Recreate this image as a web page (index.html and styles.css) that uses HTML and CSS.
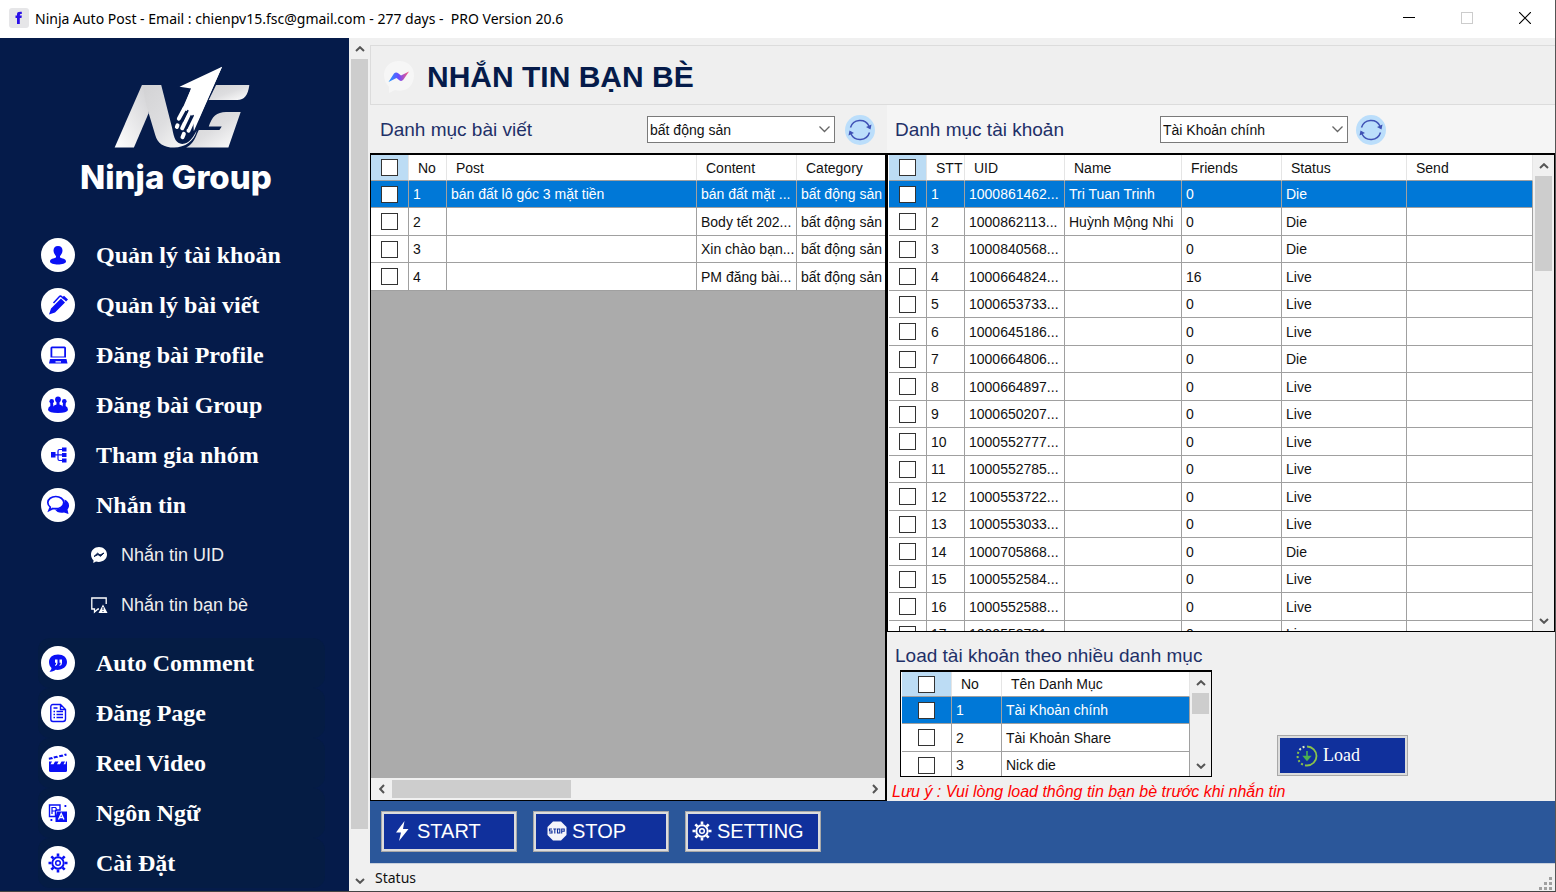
FILE: index.html
```
<!DOCTYPE html>
<html lang="vi">
<head>
<meta charset="utf-8">
<meta name="viewport" content="width=device-width, initial-scale=1">
<title>Ninja Auto Post</title>
<link rel="stylesheet" href="styles.css">
</head>
<body>
<svg class="symbols" aria-hidden="true">
  <symbol id="chev-up" viewBox="0 0 10 6"><path d="M1 5 5 1.200l4 3.800" fill="none" stroke="#555" stroke-width="2"/></symbol>
  <symbol id="chev-down" viewBox="0 0 10 6"><path d="M1 1 5 4.800l4-3.800" fill="none" stroke="#555" stroke-width="2"/></symbol>
  <symbol id="refresh" viewBox="0 0 30 30">
    <circle cx="15" cy="15" r="15" fill="#bbdefb"/>
    <g fill="none" stroke="#3f51b5" stroke-width="1.500">
      <path d="M5.500 12.500a10 10 0 0 1 18.500-1.500"/><path d="M24.500 17.500a10 10 0 0 1-18.500 1.500"/>
    </g>
    <path d="M26.500 9.500 25.500 14.500 21 12zM3.500 20.500 4.500 15.500 9 18z" fill="#3f51b5"/>
  </symbol>
  <symbol id="gear" viewBox="0 0 20 20">
    <g fill="none" stroke="currentColor">
      <circle cx="10" cy="10" r="5.700" stroke-width="1.900"/>
      <circle cx="10" cy="10" r="2.300" stroke-width="1.500"/>
      <path stroke-width="2.600" d="M10 .5v3M10 16.500v3M.5 10h3M16.500 10h3M3.300 3.300l2.100 2.100M14.600 14.600l2.100 2.100M3.300 16.700l2.100-2.100M14.600 5.400l2.100-2.100"/>
    </g>
  </symbol>
</svg>

<div class="window">
  <header class="titlebar">
    <svg class="app-icon" viewBox="0 0 20 20"><rect width="20" height="20" rx="3" fill="#e6e6e8"/><path d="M8 16V10H6.500V7.600H8V6.300C8 4.200 9.200 3.500 12.800 3.800V6C11.300 5.900 10.800 6.100 10.800 7.600H12.800L12.500 10H10.800V16z" fill="#2a10e8"/></svg>
    <span class="app-title">Ninja Auto Post - Email : chienpv15.fsc@gmail.com - 277 days -&nbsp; PRO Version 20.6</span>
    <div class="win-controls">
      <button aria-label="Minimize"><svg viewBox="0 0 12 12"><path d="M0 5.500h12" stroke="#000"/></svg></button>
      <button aria-label="Maximize" disabled><svg viewBox="0 0 12 12"><rect x=".5" y=".5" width="11" height="11" fill="none" stroke="#ccc"/></svg></button>
      <button aria-label="Close"><svg viewBox="0 0 12 12"><path d="M0 0l12 12M12 0 0 12" stroke="#000" stroke-width="1.200"/></svg></button>
    </div>
  </header>

  <div class="body">
    <aside class="sidebar">
      <div class="brand">
        <svg class="brand-mark" viewBox="340 195 415 255">
          <defs><linearGradient id="silver" x1="0" y1="0" x2="1" y2="1"><stop offset="0" stop-color="#d2d2d4"/><stop offset=".5" stop-color="#dedee0"/><stop offset="1" stop-color="#fff"/></linearGradient>
          <linearGradient id="silver2" x1="0" y1="1" x2="1" y2="0"><stop offset="0" stop-color="#fff"/><stop offset="1" stop-color="#cfcfd2"/></linearGradient></defs>
          <path d="M345 443 427 255H455L447 340 403 443z" fill="url(#silver2)"/>
          <path d="M427 255H485L518 385C524 420 532 436 556 431 574 426 583 408 592 392 584 424 556 443 524 443 492 443 474 430 467 405L440 315C434 292 434 270 427 255z" fill="url(#silver)"/>
          <path d="M650 255H750C746 286 735 300 714 300H628z" fill="url(#silver)"/>
          <path d="M724 336 687 443H560C584 431 588 410 598 390H660L667 380H628C637 350 652 336 680 336z" fill="url(#silver)"/>
          <path d="M668 200 540 260 575 265 548 328 580 340 583 394z" fill="#fff"/>
          <path d="M668 200 594 365 570 340 552 325 575 265z" fill="#fff"/>
          <g stroke="#fff" stroke-width="12" stroke-linecap="round"><path d="M555 325 538 356M572 335 548 385M588 345 567 392M534 376 532 381M553 402 549 412"/></g>
          <g stroke="#051b4a" stroke-width="5" stroke-linecap="round"><path d="M565 332 549 364M581 347 562 385"/></g>
        </svg>
        <div class="brand-name">Ninja Group</div>
      </div>
      <nav class="menu">
        <a class="item" href="#"><span class="disc"><svg viewBox="0 0 20 20"><path d="M10 1C7 1 5.500 3 5.500 5.500S7 10 8 11V12.500C6 13.500 2 13.500 2 16.500 2 18.500 6 19.500 10 19.500S18 18.500 18 16.500C18 13.500 14 13.500 12 12.500V11C13 10 14.500 8 14.500 5.500S13 1 10 1z"/></svg></span>Quản lý tài khoản</a>
        <a class="item" href="#"><span class="disc"><svg viewBox="0 0 20 20"><path d="M1 19.500 3 13.500 13 3.500 17 7.500 7 17.500zM14 2.500 16 .8 20 4.500 18 6.500z"/><path d="M5.500 8 11.500 1.500Q12.500.5 14 2L16 4" fill="none" stroke="#0a10f5" stroke-width="1.500"/></svg></span>Quản lý bài viết</a>
        <a class="item" href="#"><span class="disc"><svg viewBox="0 0 20 20"><path fill-rule="evenodd" d="M4 1.500H16.500Q18 1.500 18 3V12.500H2.500V3Q2.500 1.500 4 1.500zM4.300 3.300V11.500H16.200V3.300z"/><path fill-rule="evenodd" d="M2 14H18.500L19.500 18.500H1zM7.500 16.200V17.500H13V16.200z"/></svg></span>Đăng bài Profile</a>
        <a class="item" href="#"><span class="disc"><svg viewBox="0 0 20 20"><circle cx="10" cy="4.500" r="2.900"/><circle cx="3.700" cy="6.300" r="2.300"/><circle cx="16.300" cy="6.300" r="2.300"/><path d="M8.500 6h3v3.500Q14 10 14.500 11.500L15 8h2.700V11Q20 12 20 15 19 18 10 18T0 15Q0 12 2.300 11V8H5L5.500 11.500Q6 10 8.500 9.500z"/></svg></span>Đăng bài Group</a>
        <a class="item" href="#"><span class="disc"><svg viewBox="0 0 20 20"><path d="M3 7h4.500v5.500H3zM14 2.500h4.500v4H14zM14 8h4.500v4H14zM14 13.500h4.500v4H14z"/><path d="M7 9.800h7M14 4.500h-2.500Q10 4.500 10 6v8Q10 15.500 11.500 15.500H14" fill="none" stroke="#0a10f5" stroke-width="1.200"/></svg></span>Tham gia nhóm</a>
        <a class="item" href="#"><span class="disc"><svg class="wide" viewBox="0 0 24 20"><path d="M18.500 4.500C23 6 24.500 11 21.500 14.500L22.500 19 18 17.500C14 18.500 10.500 17 9 14.500 14 14.500 19 10 18.500 4.500z"/><path d="M9.800 1.500C5.500 1.500 1.800 4 1.800 7.500 1.800 9.500 2.800 11 4.300 12.200L3 15.500 7 13.500C13.500 14.500 17.800 11.500 17.800 7.500 17.800 4 14 1.500 9.800 1.500z" fill="#fff" stroke="#0a10f5" stroke-width="1.700"/></svg></span>Nhắn tin</a>
        <div class="submenu">
          <a class="subitem" href="#"><svg viewBox="0 0 16 16"><path d="M8 0C3.500 0 0 3.200 0 7.500 0 10 1 12 2.500 13.300L2.300 16 5 14.600C11 16 16 12.500 16 7.500 16 3.200 12.500 0 8 0z" fill="#fff"/><path d="M3 9.500 6.500 6.200 9 8 13 6 9.500 9.300 7 7.600z" fill="#051b4a" stroke="#051b4a"/></svg>Nhắn tin UID</a>
          <a class="subitem" href="#"><svg viewBox="0 0 16 16"><path d="M8 12H7L3.500 15V12H.8V1H15.200V7" fill="none" stroke="#fff" stroke-width="1.300"/><path d="M12 7.500 16.500 16H7.500z" fill="#fff"/><path d="M12 10v3M12 14v1" stroke="#051b4a"/></svg>Nhắn tin bạn bè</a>
        </div>
        <a class="item shaded" href="#"><span class="disc"><svg viewBox="0 0 20 20"><path d="M10 1.500C4.500 1.500 1 4.500 1 9 1 11.500 2 13.500 3.500 15 3.500 17 2 18 1.500 18.700 4 19 6.500 18 7.500 16.800 14 17.500 19 14 19 9 19 4.500 15.500 1.500 10 1.500z"/><path d="M7 6.500h2.500V10Q9.500 12.500 7 13V12Q8.200 11.500 8.200 9.800H7zM11.500 6.500H14V10Q14 12.500 11.500 13V12Q12.700 11.500 12.700 9.800H11.500z" fill="#fff"/></svg></span>Auto Comment</a>
        <a class="item shaded" href="#"><span class="disc"><svg viewBox="0 0 20 20"><path d="M5 1.500H12.500L17.500 6.500V16Q17.500 18.500 15 18.500H5Q2.800 18.500 2.800 16V4Q2.800 1.500 5 1.500zM12.500 2V6.500H17" fill="none" stroke="#0a10f5" stroke-width="1.400"/><path d="M5.500 5h4M5.500 8.500H7M8.500 8.500h6.500M5.500 11.500H7M8.500 11.500h6.500M5.500 14.500H7M8.500 14.500h6.500" stroke="#0a10f5" stroke-width="1.400"/></svg></span>Đăng Page</a>
        <a class="item shaded" href="#"><span class="disc"><svg viewBox="0 0 20 20"><path d="M1 12H19V17.500Q19 19 17.500 19H2.500Q1 19 1 17.500z"/><path d="M1 12.200V8.500H4L2.500 11.200H5.500L7 8.500h3.500L9 11.200H12l1.500-2.700H17l-1.500 2.700H17.500L18 8.500h1v3.700zM1 6.800.700 4.800 4 4l1 2zM6 5.500l-.5-2L9 2.700l1.200 1.900zM11.500 4.200l-.5-1.900 3.500-.8L15.500 3.400zM17 3l-1-2L18.200.5l.6 2z"/></svg></span>Reel Video</a>
        <a class="item shaded" href="#"><span class="disc"><svg viewBox="0 0 20 20"><path d="M1.500 2H12V7H9.500Q7.500 7 7.500 9V13.500H1.500z" fill="none" stroke="#0a10f5" stroke-width="1.400"/><path d="M4 11V4.500h3.500Q9.500 6.500 7 8H4" fill="none" stroke="#0a10f5" stroke-width="1.200"/><path d="M9 8.500H19V19H7.500V14z"/><path d="M10.500 16.500 13.200 10.500 16 16.500M11.500 14.500h3.500" fill="none" stroke="#fff" stroke-width="1.300"/><path d="M16.500 2h1.800v2h-1.800zM2.500 16h1.800v2H2.500z"/></svg></span>Ngôn Ngữ</a>
        <a class="item shaded" href="#"><span class="disc"><svg><use href="#gear"/></svg></span>Cài Đặt</a>
      </nav>
    </aside>
    <div class="vbar">
      <button aria-label="Scroll up"><svg><use href="#chev-up"/></svg></button>
      <div class="track"><div class="thumb thumb-menu"></div></div>
      <button aria-label="Scroll down"><svg><use href="#chev-down"/></svg></button>
    </div>

    <main class="main">
      <div class="page-head">
        <svg class="messenger" viewBox="0 0 32 34"><defs><linearGradient id="bolt"><stop offset="0" stop-color="#1d9bff"/><stop offset=".5" stop-color="#6a4bff"/><stop offset="1" stop-color="#ff5a78"/></linearGradient></defs><path d="M16 1C7 1 1 7 1 15 1 20 3 24 6 27V33L12 30C24 33 31 25 31 15 31 7 25 1 16 1z" fill="#f6f6f6"/><path d="M5.500 22 11 13.500Q13 11.500 15.500 13.500L18 15.500 26 11.500 20.500 19.500Q18.500 22 16 20L13.500 18z" fill="url(#bolt)"/></svg>
        <h1>NHẮN TIN BẠN BÈ</h1>
      </div>

      <div class="panes">
        <section class="pane">
          <div class="pane-head">
            <label class="pane-label" for="post-cat">Danh mục bài viết</label>
            <span class="combo"><select id="post-cat"><option>bất động sản</option></select><svg viewBox="0 0 11 7"><path d="M.5.5l5 5 5-5" fill="none" stroke="#666" stroke-width="1.300"/></svg></span>
            <button class="refresh" aria-label="Refresh posts"><svg><use href="#refresh"/></svg></button>
          </div>
          <div class="grid-box posts">
            <div class="grid-view">
              <table class="grid posts-table">
                <colgroup><col class="c-check"><col class="c-no"><col class="c-post"><col class="c-mid"><col class="c-mid"></colgroup>
                <thead><tr><th><input type="checkbox" aria-label="Select all posts"></th><th>No</th><th>Post</th><th>Content</th><th>Category</th></tr></thead>
                <tbody>
                  <tr class="selected"><td><input type="checkbox" aria-label="Post 1"></td><td>1</td><td>bán đất lô góc 3 mặt tiền</td><td>bán đất mặt ...</td><td>bất động sản</td></tr>
                  <tr><td><input type="checkbox" aria-label="Post 2"></td><td>2</td><td></td><td>Body tết 202...</td><td>bất động sản</td></tr>
                  <tr><td><input type="checkbox" aria-label="Post 3"></td><td>3</td><td></td><td>Xin chào bạn...</td><td>bất động sản</td></tr>
                  <tr><td><input type="checkbox" aria-label="Post 4"></td><td>4</td><td></td><td>PM đăng bài...</td><td>bất động sản</td></tr>
                </tbody>
              </table>
            </div>
            <div class="hbar">
              <button aria-label="Scroll left"><svg class="turn-left"><use href="#chev-up"/></svg></button>
              <div class="track"><div class="thumb thumb-posts"></div></div>
              <button aria-label="Scroll right"><svg class="turn-right"><use href="#chev-up"/></svg></button>
            </div>
          </div>
        </section>

        <section class="pane accounts">
          <div class="pane-head">
            <label class="pane-label" for="acc-cat">Danh mục tài khoản</label>
            <span class="combo"><select id="acc-cat"><option>Tài Khoản chính</option></select><svg viewBox="0 0 11 7"><path d="M.5.5l5 5 5-5" fill="none" stroke="#666" stroke-width="1.300"/></svg></span>
            <button class="refresh" aria-label="Refresh accounts"><svg><use href="#refresh"/></svg></button>
          </div>
          <div class="grid-box with-vbar">
            <div class="grid-view">
              <table class="grid">
                <colgroup><col class="c-check"><col class="c-no"><col class="c-mid"><col class="c-name"><col class="c-mid"><col class="c-wide"><col></colgroup>
                <thead><tr><th><input type="checkbox" aria-label="Select all accounts"></th><th>STT</th><th>UID</th><th>Name</th><th>Friends</th><th>Status</th><th>Send</th></tr></thead>
                <tbody id="accounts"></tbody>
              </table>
            </div>
            <div class="vbar">
              <button aria-label="Scroll up"><svg><use href="#chev-up"/></svg></button>
              <div class="track"><div class="thumb thumb-accounts"></div></div>
              <button aria-label="Scroll down"><svg><use href="#chev-down"/></svg></button>
            </div>
          </div>
          <div class="loader">
            <h2 class="pane-label">Load tài khoản theo nhiều danh mục</h2>
            <div class="loader-row">
              <div class="grid-box with-vbar cats">
                <div class="grid-view">
                  <table class="grid">
                    <colgroup><col class="c-50"><col class="c-50"><col></colgroup>
                    <thead><tr><th><input type="checkbox" aria-label="Select all categories"></th><th>No</th><th>Tên Danh Mục</th></tr></thead>
                    <tbody>
                      <tr class="selected"><td><input type="checkbox" aria-label="Category 1"></td><td>1</td><td>Tài Khoản chính</td></tr>
                      <tr><td><input type="checkbox" aria-label="Category 2"></td><td>2</td><td>Tài Khoản Share</td></tr>
                      <tr><td><input type="checkbox" aria-label="Category 3"></td><td>3</td><td>Nick die</td></tr>
                    </tbody>
                  </table>
                </div>
                <div class="vbar">
                  <button aria-label="Scroll up"><svg><use href="#chev-up"/></svg></button>
                  <div class="track"><div class="thumb thumb-cats"></div></div>
                  <button aria-label="Scroll down"><svg><use href="#chev-down"/></svg></button>
                </div>
              </div>
              <button class="action load"><svg viewBox="0 0 22 22"><path d="M11 1.500a9.500 9.500 0 0 1 0 19" fill="none" stroke="#8bc34a" stroke-width="1.800"/><path d="M11 20.500a9.500 9.500 0 0 1-8-14.500" fill="none" stroke="#8bc34a" stroke-width="2" stroke-dasharray="2 2.200"/><path d="M3.500 5a9.500 9.500 0 0 1 5-3.200" fill="none" stroke="#dcedc8" stroke-width="2" stroke-dasharray="2 2"/><path d="M11 6v8M8 11.500l3 3.500 3-3.500z" fill="#4caf50" stroke="#4caf50" stroke-width="1.600"/></svg>Load</button>
            </div>
            <p class="note">Lưu ý : Vui lòng load thông tin bạn bè trước khi nhắn tin</p>
          </div>
        </section>
      </div>

      <div class="toolbar">
        <button class="action"><svg viewBox="0 0 20 20"><path d="M12.500 0 4 11.500H9L7 20 16.500 8H11z" fill="#fff"/></svg>START</button>
        <button class="action"><svg viewBox="0 0 20 20"><path d="M6 .5h8L19.500 6v8L14 19.500H6L.5 14V6z" fill="#f5f5fa"/><g fill="none" stroke="#10309c" stroke-width="1.100"><path d="M5 8H2.500v2H5v2H2.200M6.300 8h3M7.800 8v4.500M10.500 8h2.300v4h-2.300zM14.700 12.500V8h2.500v2.300h-2.500"/></g></svg>STOP</button>
        <button class="action"><svg><use href="#gear"/></svg>SETTING</button>
      </div>
      <footer class="status"><span>Status</span><svg class="grip" viewBox="0 0 14 14" fill="#a0a0a0"><path d="M10 0h3v3h-3zM5 5h3v3H5zM10 5h3v3h-3zM0 10h3v3H0zM5 10h3v3H5zM10 10h3v3h-3z"/></svg></footer>
    </main>
  </div>
</div>
<script src="app.js"></script>
</body>
</html>
```
FILE: styles.css
```
* { box-sizing: border-box; }
body { margin: 0; font-family: "Liberation Sans", Arial, sans-serif; font-size: 14px; color: #111; background: #f0f0f0; }
button { margin: 0; padding: 0; border: 0; background: none; font: inherit; color: inherit; }
a { color: inherit; text-decoration: none; }
.symbols { display: none; }

.window { height: 100vh; min-height: 892px; display: flex; flex-direction: column; border-right: 1px solid #555; border-bottom: 1px solid #444; }

.titlebar { flex: none; height: 38px; display: flex; align-items: center; gap: 6px; padding: 0 1px 2px 9px; background: #fff; }
.app-icon { width: 20px; height: 20px; }
.app-title { flex: 1; font-family: "Noto Sans", "Open Sans", sans-serif; font-size: 14px; color: #000; white-space: nowrap; }
.win-controls { display: flex; }
.win-controls button { width: 58px; height: 36px; display: grid; place-items: center; }
.win-controls svg { width: 12px; height: 12px; }

.body { flex: 1; min-height: 0; display: flex; }

.sidebar { flex: none; width: 349px; background: #051b4a; color: #fff; overflow: hidden; }
.brand { height: 192px; padding-top: 27px; }
.brand-mark { display: block; width: 138px; height: 85px; margin-left: 113px; }
.brand-name { margin: 6px 0 0 80px; font-family: Inter, sans-serif; font-weight: 800; font-size: 33px; line-height: 42px; white-space: nowrap; }
.item { height: 50px; padding-left: 3px; margin: 0 24px 0 38px; display: flex; align-items: center; gap: 21px; font-family: "Liberation Serif", "Times New Roman", serif; font-weight: bold; font-size: 24px; }
.shaded { background: #051c44; border-radius: 12px; }
.disc { flex: none; width: 34px; height: 34px; border-radius: 50%; background: #fff; color: #0a10f5; display: grid; place-items: center; }
.disc svg { width: 20px; height: 20px; fill: #0a10f5; }
.disc .wide { width: 24px; }
.submenu { padding-bottom: 8px; }
.subitem { height: 50px; padding-left: 91px; display: flex; align-items: center; gap: 14px; font-size: 18px; color: #eee; }
.subitem svg { width: 16px; height: 16px; overflow: visible; }

.vbar { flex: none; width: 21px; padding: 0 2px; display: flex; flex-direction: column; background: #f0f0f0; }
.vbar button { flex: none; height: 21px; display: grid; place-items: center; }
.vbar button svg, .hbar button svg { width: 10px; height: 6px; }
.track { flex: 1; min-height: 0; min-width: 0; }
.thumb { background: #cdcdcd; }
.thumb-menu { height: 95%; }
.thumb-accounts { height: 22%; }
.thumb-cats { height: 34%; }
.thumb-posts { height: 100%; width: 38%; }
.hbar { flex: none; height: 22px; padding: 2px 0; display: flex; background: #f0f0f0; }
.hbar button { flex: none; width: 21px; display: grid; place-items: center; }
.turn-left { transform: rotate(-90deg); }
.turn-right { transform: rotate(90deg); }

.main { flex: 1; min-width: 0; display: flex; flex-direction: column; }
.page-head { flex: none; height: 60px; margin-top: 7px; border: 1px solid #dcdcdc; border-right: 0; display: flex; align-items: center; gap: 12px; padding: 4px 0 0 12px; background: #efefef; }
.messenger { width: 32px; height: 34px; }
h1 { margin: 0; font-size: 30px; line-height: 34px; color: #051b4a; white-space: nowrap; }

.panes { flex: 1; min-height: 0; display: grid; grid-template-columns: 517fr 668fr; }
.pane { min-width: 0; min-height: 0; display: flex; flex-direction: column; }
.pane-head { flex: none; height: 48px; display: flex; align-items: center; padding: 1px 12px 0 10px; }
.pane .pane-label { flex: 1; font-size: 19px; font-weight: normal; color: #1f3068; white-space: nowrap; }
.accounts .pane-head { background: #f5f5f5; padding-left: 8px; }
.accounts .pane-head .pane-label { flex: 0 0 265px; }
.combo { position: relative; display: block; width: 188px; height: 27px; margin-right: 10px; }
.accounts .combo { margin-right: 8px; }
.combo select { width: 100%; height: 100%; appearance: none; border: 1px solid #7a7a7a; border-radius: 0; background: #fff; padding: 0 24px 0 2px; font: inherit; color: #111; }
.combo svg { position: absolute; right: 5px; top: 10px; width: 11px; height: 7px; pointer-events: none; }
.refresh { width: 30px; height: 30px; }
.refresh svg { display: block; width: 30px; height: 30px; }

.grid-box { flex: 1; min-height: 0; display: flex; border: 1px solid #000; border-top-width: 2px; background: #ababab; }
.posts { flex-direction: column; border-right-width: 2px; }
.grid-view { flex: 1; min-width: 0; min-height: 0; overflow: hidden; }
.grid { width: 100%; table-layout: fixed; border-collapse: separate; border-spacing: 0; background: #fff; }
.posts-table { width: 526px; }
.c-check, .c-no { width: 38px; }
.c-post { width: 250px; }
.c-mid { width: 100px; }
.c-name { width: 117px; }
.c-wide { width: 125px; }
.c-50 { width: 50px; }
.grid th, .grid td { padding: 0 0 0 4px; text-align: left; font-weight: normal; white-space: nowrap; overflow: hidden; border-right: 1px solid #a0a0a0; border-bottom: 1px solid #a0a0a0; }
.grid th { height: 26px; padding-left: 9px; border-right-color: #e5e5e5; }
.grid tr { height: 27px; }
.grid thead tr { height: 26px; }
.grid tbody tr:nth-child(even) { height: 28px; }
.grid th:first-child, .grid td:first-child { padding: 0; text-align: center; }
.grid th:first-child { background: #bcdcf4; }
.grid .selected td { background: #0078d7; color: #fff; }
.grid input { appearance: none; display: block; width: 17px; height: 17px; margin: 0 auto; border: 1px solid #333; background: #fff; }

.with-vbar { background: #fff; }
.with-vbar .grid-view { padding-left: 1px; }
.loader { flex: none; height: 169px; padding-left: 8px; }
.loader h2 { margin: 0; padding-top: 10px; line-height: 27px; }
.loader-row { display: flex; height: 108px; padding: 1px 0 0 5px; gap: 65px; align-items: flex-end; }
.cats { flex: none; width: 312px; height: 107px; }
.cats .grid th { height: 25px; }
.cats .grid thead tr { height: 25px; }
.note { margin: 5px 0 0 -3px; font-size: 16px; line-height: 19px; font-style: italic; color: #f00; white-space: nowrap; }

.toolbar { flex: none; height: 63px; padding: 0 11px 2px; display: flex; align-items: center; gap: 16px; background: #2b579a; border-bottom: 1px solid #c8d0dc; }
.action { width: 136px; height: 41px; display: flex; align-items: center; gap: 5px; padding-left: 8px; border: 3px solid #dcdcdc; outline: 1px solid #a8a8a8; outline-offset: -1px; background: #10309c; color: #fff; font-size: 20px; }
.action svg { width: 20px; height: 20px; }
.toolbar .action:nth-child(2) { padding-left: 11px; }
.toolbar .action:nth-child(3) { padding-left: 4px; }
.load { width: 131px; margin-bottom: 1px; padding-left: 16px; font-family: "Liberation Serif", serif; font-size: 18px; }
.load svg { width: 22px; height: 22px; }
.status { flex: none; height: 27px; padding: 0 2px 0 5px; display: flex; align-items: center; justify-content: space-between; font-family: "Noto Sans", sans-serif; }
.grip { width: 14px; height: 14px; align-self: flex-end; }
```
FILE: app.js
```
const accounts = [
  ["1000861462...", "Tri Tuan Trinh", "0", "Die"],
  ["1000862113...", "Huỳnh Mộng Nhi", "0", "Die"],
  ["1000840568...", "", "0", "Die"],
  ["1000664824...", "", "16", "Live"],
  ["1000653733...", "", "0", "Live"],
  ["1000645186...", "", "0", "Live"],
  ["1000664806...", "", "0", "Die"],
  ["1000664897...", "", "0", "Live"],
  ["1000650207...", "", "0", "Live"],
  ["1000552777...", "", "0", "Live"],
  ["1000552785...", "", "0", "Live"],
  ["1000553722...", "", "0", "Live"],
  ["1000553033...", "", "0", "Live"],
  ["1000705868...", "", "0", "Die"],
  ["1000552584...", "", "0", "Live"],
  ["1000552588...", "", "0", "Live"],
  ["1000552781...", "", "0", "Live"]
];
document.getElementById("accounts").innerHTML = accounts.map(([uid, name, friends, status], i) =>
  `<tr${i ? "" : ' class="selected"'}><td><input type="checkbox" aria-label="Account ${i + 1}"></td><td>${i + 1}</td><td>${uid}</td><td>${name}</td><td>${friends}</td><td>${status}</td><td></td></tr>`
).join("");
```
